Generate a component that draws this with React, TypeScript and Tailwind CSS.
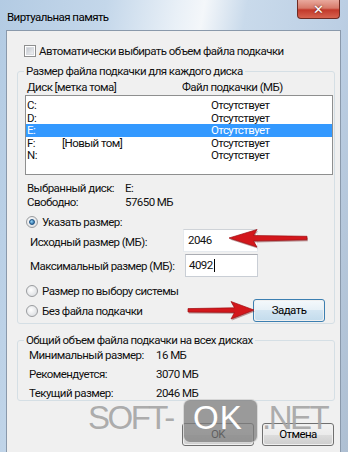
import React from "react";

const font = { fontFamily: 'Roboto, "Noto Sans", sans-serif' };
const T = "text-[11.5px] tracking-[-0.55px]";

function Checkbox() {
  return (
    <div className="w-[12px] h-[12px] border border-[#8e8f8f] bg-white p-[1px] shrink-0">
      <div className="w-full h-full bg-[linear-gradient(135deg,#c4c8ce,#eef0f2)] border border-[#d8dbe0]" />
    </div>
  );
}

function Radio({ checked = false }: { checked?: boolean }) {
  return (
    <div className="w-[12px] h-[12px] rounded-full border border-[#9a9c9f] bg-[radial-gradient(circle_at_40%_40%,#ffffff,#d3d6da)] flex items-center justify-center shrink-0">
      {checked && (
        <div className="w-[6px] h-[6px] rounded-full bg-[radial-gradient(circle_at_35%_35%,#8fd0f5,#1f5f98)] border border-[#1a4f80]" />
      )}
    </div>
  );
}

function WinButton({ label, hot = false }: { label: string; hot?: boolean }) {
  return (
    <div
      className={`w-[72px] h-[23px] rounded-[3px] border ${
        hot ? "border-[#3c7fb1]" : "border-[#707070]"
      } p-[1px]`}
    >
      <div
        className={`w-full h-full rounded-[2px] flex items-center justify-center ${T} text-black ${
          hot
            ? "bg-[linear-gradient(#f3f8fb_0%,#e6f0f7_50%,#d3e5f2_50%,#c4dced_100%)]"
            : "bg-[linear-gradient(#f2f2f2_0%,#ebebeb_50%,#dddddd_50%,#cfcfcf_100%)]"
        }`}
      >
        {label}
      </div>
    </div>
  );
}

const rows: { d: string; label?: string; sel?: boolean }[] = [
  { d: "C:" },
  { d: "D:" },
  { d: "E:", sel: true },
  { d: "F:", label: "[Новый том]" },
  { d: "N:" },
];

const arrow1 = "229,238 257,229.5 253.5,235.5 307,236.3 307,239.8 253.5,241 257,247";
const arrow2 = "254,310 231,301.5 234.5,307.8 188,308.6 188,312 234.5,312.4 231,319";

export default function App() {
  return (
    <div
      className="relative w-[348px] h-[452px] overflow-hidden bg-[linear-gradient(100deg,#b3cbe3_0%,#c4d7ea_25%,#e9f0f7_42%,#f4f7fa_48%,#c9daeb_58%,#bccfe4_80%,#aebfd2_100%)] text-[#111]"
      style={font}
    >
      {/* title bar */}
      <div className="h-[30px] pl-[7px]">
        <div className={`pt-[9px] ${T} leading-[16px] text-black`}>Виртуальная память</div>
      </div>
      {/* close button */}
      <div className="absolute top-0 left-[297px] w-[43px] h-[19px] rounded-b-[4px] border border-t-0 border-[#6e2b23] bg-[linear-gradient(#e9a99d_0%,#d77a6a_45%,#c2392b_55%,#d6634f_100%)] flex items-center justify-center">
        <span className="text-white text-[13px] font-bold leading-none [text-shadow:0_0_2px_#5a1a12]" style={{ fontFamily: '"DejaVu Sans", sans-serif' }}>
          ✕
        </span>
      </div>

      {/* client area */}
      <div className="ml-[6px] w-[335px] h-[422px] border border-b-0 border-[#8a99ab] bg-[#f0f0f0]">
        {/* checkbox row */}
        <div className="mt-[13px] ml-[17px] h-[14px] flex items-center gap-[3px]">
          <Checkbox />
          <span className={`${T} leading-[14px] whitespace-nowrap`}>Автоматически выбирать объем файла подкачки</span>
        </div>

        {/* group 1 */}
        <fieldset className="mt-[5px] ml-[10px] w-[318px] border border-[#d5dfe5] rounded-[3px] pb-[1px]">
          <legend className={`ml-[6px] px-[2px] ${T} leading-[16px] whitespace-nowrap`}>Размер файла подкачки для каждого диска</legend>
          <div className={`h-[16px] pl-[9px] grid grid-cols-[155px_1fr] ${T} leading-[16px] whitespace-nowrap`}>
            <span>Диск [метка тома]</span>
            <span>Файл подкачки (МБ)</span>
          </div>
          <div className="ml-[7px] w-[308px] h-[80px] border border-[#8e8f8f] bg-white pt-[3px]">
            {rows.map((r) => (
              <div
                key={r.d}
                className={`h-[12.5px] pl-[1px] grid grid-cols-[35px_149px_1fr] ${T} leading-[12.5px] whitespace-nowrap ${
                  r.sel ? "bg-[#3399ff] text-white" : ""
                }`}
              >
                <span>{r.d}</span>
                <span>{r.label ?? ""}</span>
                <span>Отсутствует</span>
              </div>
            ))}
          </div>
          <div className={`mt-[6px] pl-[9px] grid grid-cols-[98px_1fr] ${T} leading-[14px] whitespace-nowrap`}>
            <span>Выбранный диск:</span>
            <span>E:</span>
            <span>Свободно:</span>
            <span>57650 МБ</span>
          </div>
          <div className="mt-[6px] h-[14px] pl-[8px] flex items-center gap-[4px]">
            <Radio checked />
            <span className={`${T} leading-[14px] whitespace-nowrap`}>Указать размер:</span>
          </div>
          <div className="h-[23px] flex items-center">
            <span className={`w-[165px] pl-[12px] pt-[2px] ${T} leading-[14px] whitespace-nowrap`}>Исходный размер (МБ):</span>
            <div className={`w-[75px] h-[23px] bg-white border border-[#e6eaee] border-t-[#cfd3d8] pl-[4px] flex items-center ${T}`}>
              2046
            </div>
          </div>
          <div className="mt-[2px] h-[23px] flex items-center">
            <span className={`w-[167px] pl-[12px] ${T} leading-[14px] whitespace-nowrap`}>Максимальный размер (МБ):</span>
            <div className={`w-[73px] h-[23px] bg-white border border-[#c9ced5] border-t-[#abadb3] pl-[3px] flex items-center ${T}`}>
              4092<span className="ml-[1px] w-[1px] h-[13px] bg-black" />
            </div>
          </div>
          <div className="mt-[7px] h-[14px] pl-[8px] flex items-center gap-[4px]">
            <Radio />
            <span className={`${T} leading-[14px] whitespace-nowrap`}>Размер по выбору системы</span>
          </div>
          <div className="mt-[1px] h-[23px] flex items-center">
            <div className="w-[235px] pl-[8px] flex items-center gap-[4px]">
              <Radio />
              <span className={`${T} leading-[14px] whitespace-nowrap`}>Без файла подкачки</span>
            </div>
            <WinButton label="Задать" hot />
          </div>
        </fieldset>

        {/* group 2 */}
        <fieldset className="mt-[8px] ml-[10px] w-[318px] border border-[#d5dfe5] rounded-[3px]">
          <legend className={`ml-[6px] px-[2px] ${T} leading-[16px] whitespace-nowrap`}>Общий объем файла подкачки на всех дисках</legend>
          <div className={`-mt-[2px] pl-[11px] grid grid-cols-[127px_1fr] ${T} leading-[19px] whitespace-nowrap`}>
            <span className="h-[19px]">Минимальный размер:</span>
            <span className="h-[19px]">16 МБ</span>
            <span className="h-[19px]">Рекомендуется:</span>
            <span className="h-[19px]">3070 МБ</span>
            <span className="h-[16px]">Текущий размер:</span>
            <span className="h-[16px]">2046 МБ</span>
          </div>
        </fieldset>

        {/* bottom buttons */}
        <div className="mt-[22px] flex justify-end gap-[8px] pr-[6px]">
          <WinButton label="OK" />
          <WinButton label="Отмена" />
        </div>
      </div>

      {/* red arrows */}
      <svg className="absolute inset-0 pointer-events-none" width="348" height="452" viewBox="0 0 348 452">
        <g transform="translate(0.8,1.4)" fill="#6a0a0c" opacity="0.4">
          <polygon points={arrow1} />
          <polygon points={arrow2} />
        </g>
        <polygon points={arrow1} fill="#d3171c" stroke="#9e0f12" strokeWidth="0.7" strokeLinejoin="round" />
        <polygon points={arrow2} fill="#d3171c" stroke="#9e0f12" strokeWidth="0.7" strokeLinejoin="round" />
      </svg>

      {/* watermark */}
      <div className="absolute left-[183px] top-[399px] w-[75px] h-[44px] rounded-[7px] bg-[#7d7d7d]/75 border border-white/60" />
      <span
        className="absolute left-[88px] top-[398px] text-[33px] leading-[40px] text-[#a3a3a3]/90 tracking-[-2.5px]"
        style={{ fontFamily: '"Liberation Sans", Arial, sans-serif' }}
      >
        SOFT-
      </span>
      <span
        className="absolute left-[193px] top-[398px] text-[33px] leading-[40px] text-white tracking-[1px]"
        style={{ fontFamily: '"Liberation Sans", Arial, sans-serif' }}
      >
        OK
      </span>
      <span
        className="absolute left-[262px] top-[398px] text-[33px] leading-[40px] text-[#a3a3a3]/90 tracking-[-2.5px]"
        style={{ fontFamily: '"Liberation Sans", Arial, sans-serif' }}
      >
        .NET
      </span>
    </div>
  );
}
